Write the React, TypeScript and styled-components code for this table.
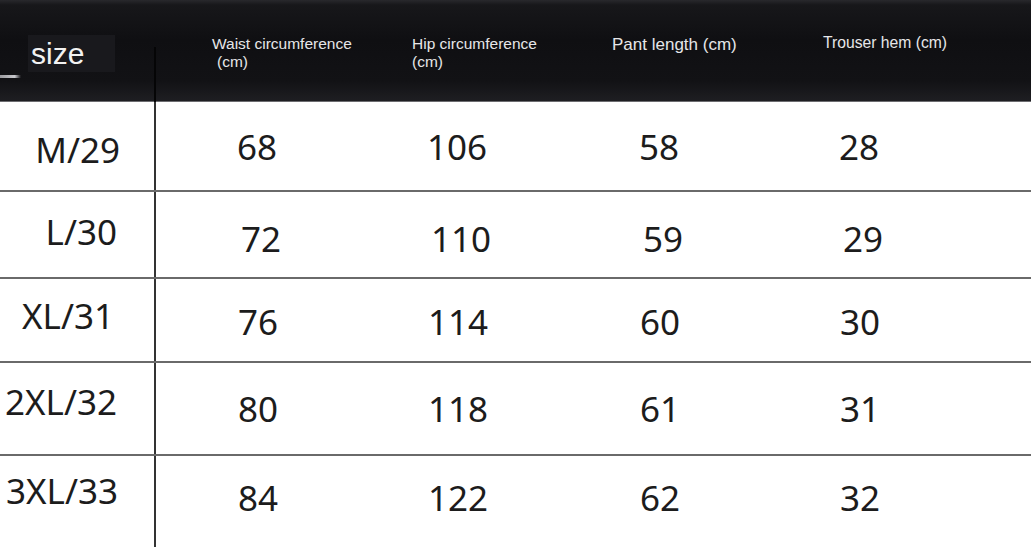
import React from "react";
import styled, { createGlobalStyle, css } from "styled-components";

const GlobalStyle = createGlobalStyle`
  html, body { margin: 0; padding: 0; background: #ffffff; }
  body { font-family: "Noto Sans", "Liberation Sans", Arial, sans-serif; }
`;

const COLS = "156px 256px 200px 211px 1fr";

const Page = styled.div`
  width: 1031px;
  height: 553px;
  overflow: hidden;
  background: #ffffff;
`;

const Header = styled.div`
  position: relative;
  display: grid;
  grid-template-columns: ${COLS};
  height: 102px;
  box-sizing: border-box;
  border-bottom: 1px solid #6c6c70;
  background: linear-gradient(
    to bottom,
    #28282c 0px,
    #17171a 5px,
    #0f0f12 40%,
    #121215 80%,
    #1e1e22 100%
  );
  font-family: "Liberation Sans", Arial, sans-serif;
  color: #e6e6e8;

  &::before {
    content: "";
    position: absolute;
    left: 0;
    top: 75px;
    width: 21px;
    height: 3px;
    background: linear-gradient(to right, #9a9a9e, #c8c8cc 70%, rgba(200, 200, 204, 0));
  }
`;

const SizeHead = styled.div`
  position: relative;
  &::after {
    content: "";
    position: absolute;
    right: 0;
    top: 47px;
    bottom: -1px;
    width: 2px;
    background: #050506;
  }
`;

const SizeBadge = styled.div`
  margin: 35px 0 0 28px;
  width: 87px;
  height: 37px;
  box-sizing: border-box;
  padding-left: 3px;
  background: #19191d;
  font-size: 30px;
  line-height: 37px;
  color: #f2f2f2;
`;

const HeadCell = styled.div<{ $left: number; $top: number; $size: number; $ls?: number }>`
  padding-left: ${(p) => p.$left}px;
  padding-top: ${(p) => p.$top}px;
  font-size: ${(p) => p.$size}px;
  letter-spacing: ${(p) => p.$ls ?? 0}px;
  line-height: 18px;
  white-space: nowrap;
`;

const Unit = styled.div<{ $indent: number }>`
  padding-left: ${(p) => p.$indent}px;
`;

const Row = styled.div<{ $h: number; $last?: boolean }>`
  display: grid;
  grid-template-columns: ${COLS};
  grid-template-rows: 100%;
  height: ${(p) => p.$h}px;
  box-sizing: border-box;
  border-bottom: ${(p) => (p.$last ? "none" : "2px solid #6a6a6a")};
`;

const shift = (dy: number) =>
  dy >= 0
    ? css`padding-top: ${2 * dy}px;`
    : css`padding-bottom: ${-2 * dy}px;`;

const SizeCell = styled.div<{ $dy: number; $dx: number }>`
  display: flex;
  align-items: center;
  justify-content: flex-end;
  box-sizing: border-box;
  padding-right: ${(p) => 37 - p.$dx}px;
  border-right: 2px solid #333333;
  font-size: 35px;
  line-height: 1;
  color: #1c1c1c;
  ${(p) => shift(p.$dy)}
`;

const ValueCell = styled.div<{ $left: number; $dy: number }>`
  display: flex;
  align-items: center;
  box-sizing: border-box;
  padding-left: ${(p) => p.$left}px;
  font-size: 35px;
  line-height: 1;
  color: #1c1c1c;
  ${(p) => shift(p.$dy)}
`;

const valuePads = [81, 15, 27, 16];

const rows = [
  { size: "M/29", values: ["68", "106", "58", "28"], h: 90, ldy: 3.5, ldx: 3, vdy: 0, dx: 0 },
  { size: "L/30", values: ["72", "110", "59", "29"], h: 87, ldy: -3, ldx: 0, vdy: 3.5, dx: 4 },
  { size: "XL/31", values: ["76", "114", "60", "30"], h: 84, ldy: -5, ldx: -3, vdy: 1, dx: 1 },
  { size: "2XL/32", values: ["80", "118", "61", "31"], h: 93, ldy: -7, ldx: 0, vdy: 0, dx: 1 },
  { size: "3XL/33", values: ["84", "122", "62", "32"], h: 91, ldy: -11, ldx: 1, vdy: -4.5, dx: 1 },
];

export default function App() {
  return (
    <>
      <GlobalStyle />
      <Page>
        <Header>
          <SizeHead>
            <SizeBadge>size</SizeBadge>
          </SizeHead>
          <HeadCell $left={56} $top={35} $size={15.5}>
            Waist circumference
            <Unit $indent={5}>(cm)</Unit>
          </HeadCell>
          <HeadCell $left={0} $top={35} $size={15.5}>
            Hip circumference
            <Unit $indent={0}>(cm)</Unit>
          </HeadCell>
          <HeadCell $left={0} $top={36} $size={17}>
            Pant length (cm)
          </HeadCell>
          <HeadCell $left={0} $top={34} $size={15.7}>
            Trouser hem (cm)
          </HeadCell>
        </Header>
        {rows.map((r, i) => (
          <Row key={r.size} $h={r.h} $last={i === rows.length - 1}>
            <SizeCell $dy={r.ldy} $dx={r.ldx}>{r.size}</SizeCell>
            {r.values.map((v, j) => (
              <ValueCell key={j} $left={valuePads[j] + r.dx} $dy={r.vdy}>
                {v}
              </ValueCell>
            ))}
          </Row>
        ))}
      </Page>
    </>
  );
}
